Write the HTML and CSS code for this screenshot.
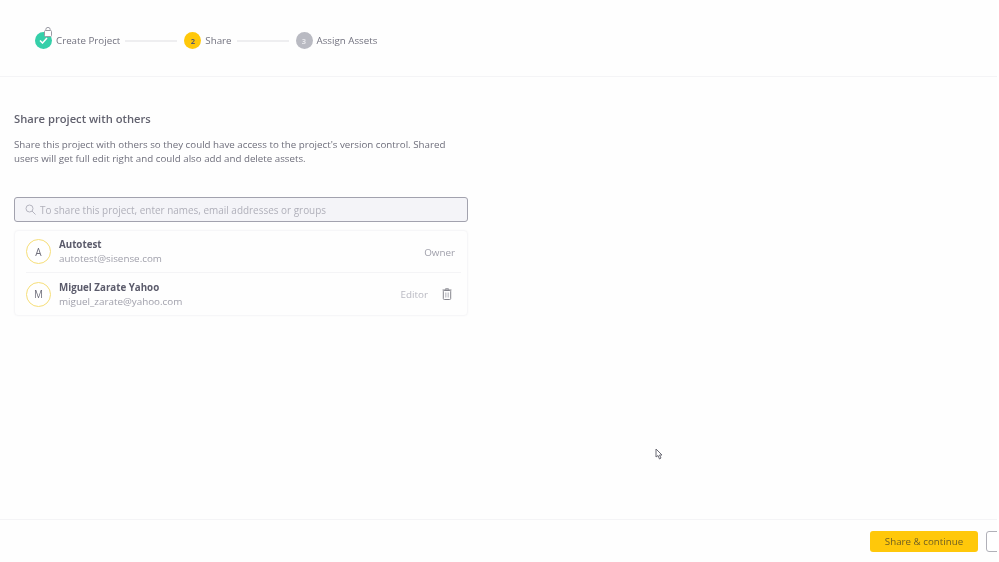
FILE: index.html
```html
<!DOCTYPE html>
<html lang="en">
<head>
<meta charset="utf-8">
<title>Share project</title>
<link rel="stylesheet" href="styles.css">
</head>
<body>
<div class="page">
  <header class="stepper">
    <div class="step">
      <span class="badge badge-done">
        <svg class="lock" width="8" height="10" viewBox="0 0 8 10"><path d="M1.8 4V2.6a2.2 2.2 0 0 1 4.4 0V4" fill="none" stroke="#9a9aa4" stroke-width="1"/><rect x=".5" y="3.5" width="7" height="6" rx="1" fill="#fff" stroke="#9a9aa4" stroke-width="1"/></svg>
        <svg width="9" height="7" viewBox="0 0 9 7"><path d="M1 3.5l2.5 2.5 4.5-5" fill="none" stroke="#fff" stroke-width="1.5"/></svg>
      </span>
      <span class="step-label">Create Project</span>
    </div>
    <span class="connector"></span>
    <div class="step">
      <span class="badge badge-current">2</span>
      <span class="step-label">Share</span>
    </div>
    <span class="connector"></span>
    <div class="step">
      <span class="badge badge-todo">3</span>
      <span class="step-label">Assign Assets</span>
    </div>
  </header>
  <main class="content">
    <h1 class="title">Share project with others</h1>
    <p class="desc">Share this project with others so they could have access to the project's version control. Shared<br>users will get full edit right and could also add and delete assets.</p>
    <div class="search">
      <svg width="11" height="11" viewBox="0 0 11 11"><circle cx="4.5" cy="4.5" r="3.5" fill="none" stroke="#b5b5c0" stroke-width="1"/><path d="M7 7l3.5 3.5" stroke="#b5b5c0" stroke-width="1"/></svg>
      <span>To share this project, enter names, email addresses or groups</span>
    </div>
    <div class="users">
      <div class="user">
        <span class="avatar">A</span>
        <div class="who"><div class="name">Autotest</div><div class="email">autotest@sisense.com</div></div>
        <span class="role role-owner">Owner</span>
      </div>
      <div class="user">
        <span class="avatar">M</span>
        <div class="who"><div class="name">Miguel Zarate Yahoo</div><div class="email">miguel_zarate@yahoo.com</div></div>
        <span class="role role-editor">Editor</span>
        <svg class="trash" width="10" height="12" viewBox="0 0 10 12"><path d="M3.5 1.5V.8h3v.7M.5 2h9" fill="none" stroke="#85858d" stroke-width="1"/><rect x="1.3" y="2.5" width="7.4" height="9" rx="1" fill="none" stroke="#85858d" stroke-width="1"/><path d="M3.5 4.5v5M5 4.5v5M6.5 4.5v5" stroke="#b0b0b8" stroke-width=".7"/></svg>
      </div>
    </div>
  </main>
  <footer class="footer">
    <button class="btn btn-primary">Share &amp; continue</button>
    <button class="btn btn-secondary"></button>
  </footer>
  <svg class="cursor" width="8" height="12" viewBox="0 0 8 12"><path d="M1 1v8l2-1.5L4.5 11 6 10 4.5 7H7z" fill="#fff" stroke="#6a6a74" stroke-width="1"/></svg>
</div>
</body>
</html>
```
FILE: styles.css
```css
* { box-sizing: border-box; }
html, body { margin: 0; height: 100%; background: #fff; }
body { overflow: hidden; }
.page {
  position: relative;
  width: 997px;
  height: 562px;
  display: flex;
  flex-direction: column;
  background: #fefefe;
  font-family: "Open Sans", sans-serif;
  color: #5b5b6b;
  filter: blur(0.6px);
  overflow: hidden;
}
.stepper {
  height: 77px;
  flex: none;
  display: flex;
  align-items: center;
  padding: 5px 0 0 35px;
  border-bottom: 1px solid #f4f4f6;
}
.step { display: flex; align-items: center; gap: 4px; }
.badge {
  position: relative;
  width: 17px;
  height: 17px;
  border-radius: 50%;
  display: flex;
  align-items: center;
  justify-content: center;
  font-size: 7.5px;
  font-weight: 700;
}
.badge-done { background: #35cfa9; }
.badge-current { background: #ffc80a; color: #5b5b6b; }
.badge-todo { background: #b9bac2; color: #e6e6ea; }
.lock { position: absolute; left: 9px; top: -5px; }
.step-label { font-size: 9.75px; color: #72727f; }
.connector { width: 52px; height: 2px; background: #eeeef0; margin: 0 7px 0 5px; }
.content { flex: 1; padding: 34px 14px 0; }
.title { margin: 0; font-size: 11.2px; line-height: 16px; font-weight: 600; color: #62626f; }
.desc { margin: 11px 0 0; font-size: 9.75px; line-height: 13.5px; color: #6f6f7c; }
.search {
  margin-top: 32px;
  width: 454px;
  height: 25px;
  display: flex;
  align-items: center;
  gap: 4px;
  padding-left: 10px;
  background: #f4f4f8;
  border: 1px solid #a2a2ae;
  border-radius: 3px;
  font-size: 9.95px;
  color: #b0b0ba;
}
.users {
  margin-top: 8px;
  width: 454px;
  padding: 0 6px 0 11px;
  border: 1px solid #f6f6f8;
  border-radius: 4px;
  box-shadow: 0 0 2px #f6f6f8;
}
.user {
  height: 41px;
  display: flex;
  align-items: center;
}
.user + .user { height: 43px; border-top: 1px solid #f4f4f6; }
.avatar {
  width: 25px;
  height: 25px;
  flex: none;
  display: flex;
  align-items: center;
  justify-content: center;
  border: 1px solid #f6de78;
  border-radius: 50%;
  font-size: 10px;
  color: #6f6f7c;
  background: #fff;
}
.who { flex: 1; margin-left: 8px; }
.name { font-size: 9.75px; line-height: 13px; font-weight: 700; color: #5b5b6b; }
.email { font-size: 9.85px; line-height: 14px; color: #a0a0ab; }
.role { font-size: 9.85px; padding-right: 6px; }
.role-owner { color: #a0a0ab; }
.role-editor { color: #b8b8c1; padding-right: 0; }
.trash { margin: 0 9px 0 14px; }
.footer {
  flex: none;
  height: 43px;
  display: flex;
  align-items: center;
  padding: 0 0 0 870px;
  gap: 8px;
  border-top: 1px solid #f4f4f6;
}
.btn {
  flex: none;
  height: 21px;
  border-radius: 3px;
  font-family: inherit;
  font-size: 9.75px;
  padding: 0;
}
.btn-primary { width: 108px; background: #ffc80a; border: 0; color: #6f5f24; }
.btn-secondary { width: 60px; background: #fff; border: 1px solid #b0b0b8; }
.cursor { position: absolute; left: 655px; top: 448px; }
```
